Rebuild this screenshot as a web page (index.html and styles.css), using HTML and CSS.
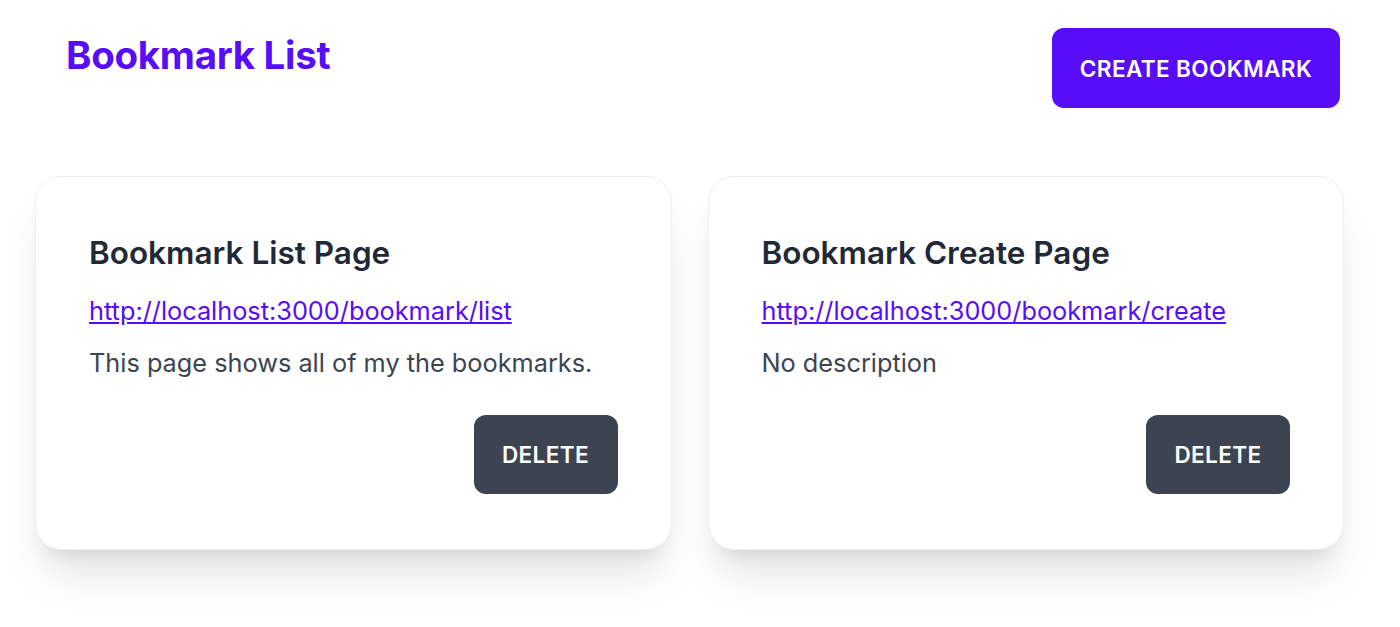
FILE: index.html
```html
<!DOCTYPE html>
<html lang="en">
<head>
    <meta charset="UTF-8">
    <meta name="viewport" content="width=device-width, initial-scale=1.0">
    <title>Bookmark List</title>
    <link rel="stylesheet" href="styles.css">
</head>
<body>
    <header class="page-header">
        <h1 class="page-title">Bookmark List</h1>
        <button class="btn btn-primary">Create Bookmark</button>
    </header>

    <div class="bookmark-grid">
        <div class="card">
            <h2 class="card-title">Bookmark List Page</h2>
            <a class="card-link" href="#">http://localhost:3000/bookmark/list</a>
            <p class="card-desc">This page shows all of my the bookmarks.</p>
            <div class="card-actions">
                <button class="btn btn-neutral">Delete</button>
            </div>
        </div>
        <div class="card">
            <h2 class="card-title">Bookmark Create Page</h2>
            <a class="card-link" href="#">http://localhost:3000/bookmark/create</a>
            <p class="card-desc">No description</p>
            <div class="card-actions">
                <button class="btn btn-neutral">Delete</button>
            </div>
        </div>
    </div>
</body>
</html>
```

FILE: styles.css
```css
body {
    margin: 0;
    padding-bottom: 90px;
    font-family: Inter, "Noto Sans", sans-serif;
    background-color: #fff;
    color: #1f2937;
}

.page-header {
    display: flex;
    justify-content: space-between;
    align-items: flex-start;
    padding: 28px 60px 0 66px;
}

.page-title {
    margin: 0;
    font-size: 38.5px;
    line-height: 54px;
    font-weight: 700;
    color: #570df8;
    letter-spacing: -0.3px;
}

.btn {
    border: none;
    border-radius: 12px;
    color: #fff;
    font-family: inherit;
    font-weight: 600;
    text-transform: uppercase;
    letter-spacing: 0.4px;
    cursor: pointer;
}

.btn-primary {
    width: 288px;
    height: 80px;
    background-color: #570df8;
    font-size: 22.5px;
}

.btn-neutral {
    width: 144px;
    height: 79px;
    background-color: #3d4451;
    font-size: 22.5px;
}

.bookmark-grid {
    display: grid;
    grid-template-columns: 1fr 1fr;
    gap: 36px;
    margin: 68px 56px 0 35px;
}

.card {
    display: flex;
    flex-direction: column;
    height: 374px;
    box-sizing: border-box;
    padding: 54px 53px 55px 53px;
    background-color: #fff;
    border: 1px solid #eeeeee;
    border-radius: 26px;
    box-shadow: 0 33px 42px -8px rgba(0, 0, 0, 0.1), 0 13px 17px -10px rgba(0, 0, 0, 0.1);
}

.card-title {
    margin: 0 0 18px;
    font-size: 31.5px;
    line-height: 44px;
    font-weight: 600;
    color: #1f2937;
}

.card-link {
    align-self: flex-start;
    font-size: 25.3px;
    line-height: 36px;
    color: #570df8;
}

.card-desc {
    margin: 16px 0 0;
    font-size: 25.3px;
    line-height: 36px;
    color: #3d4451;
}

.card-actions {
    display: flex;
    justify-content: flex-end;
    margin-top: auto;
}
```
